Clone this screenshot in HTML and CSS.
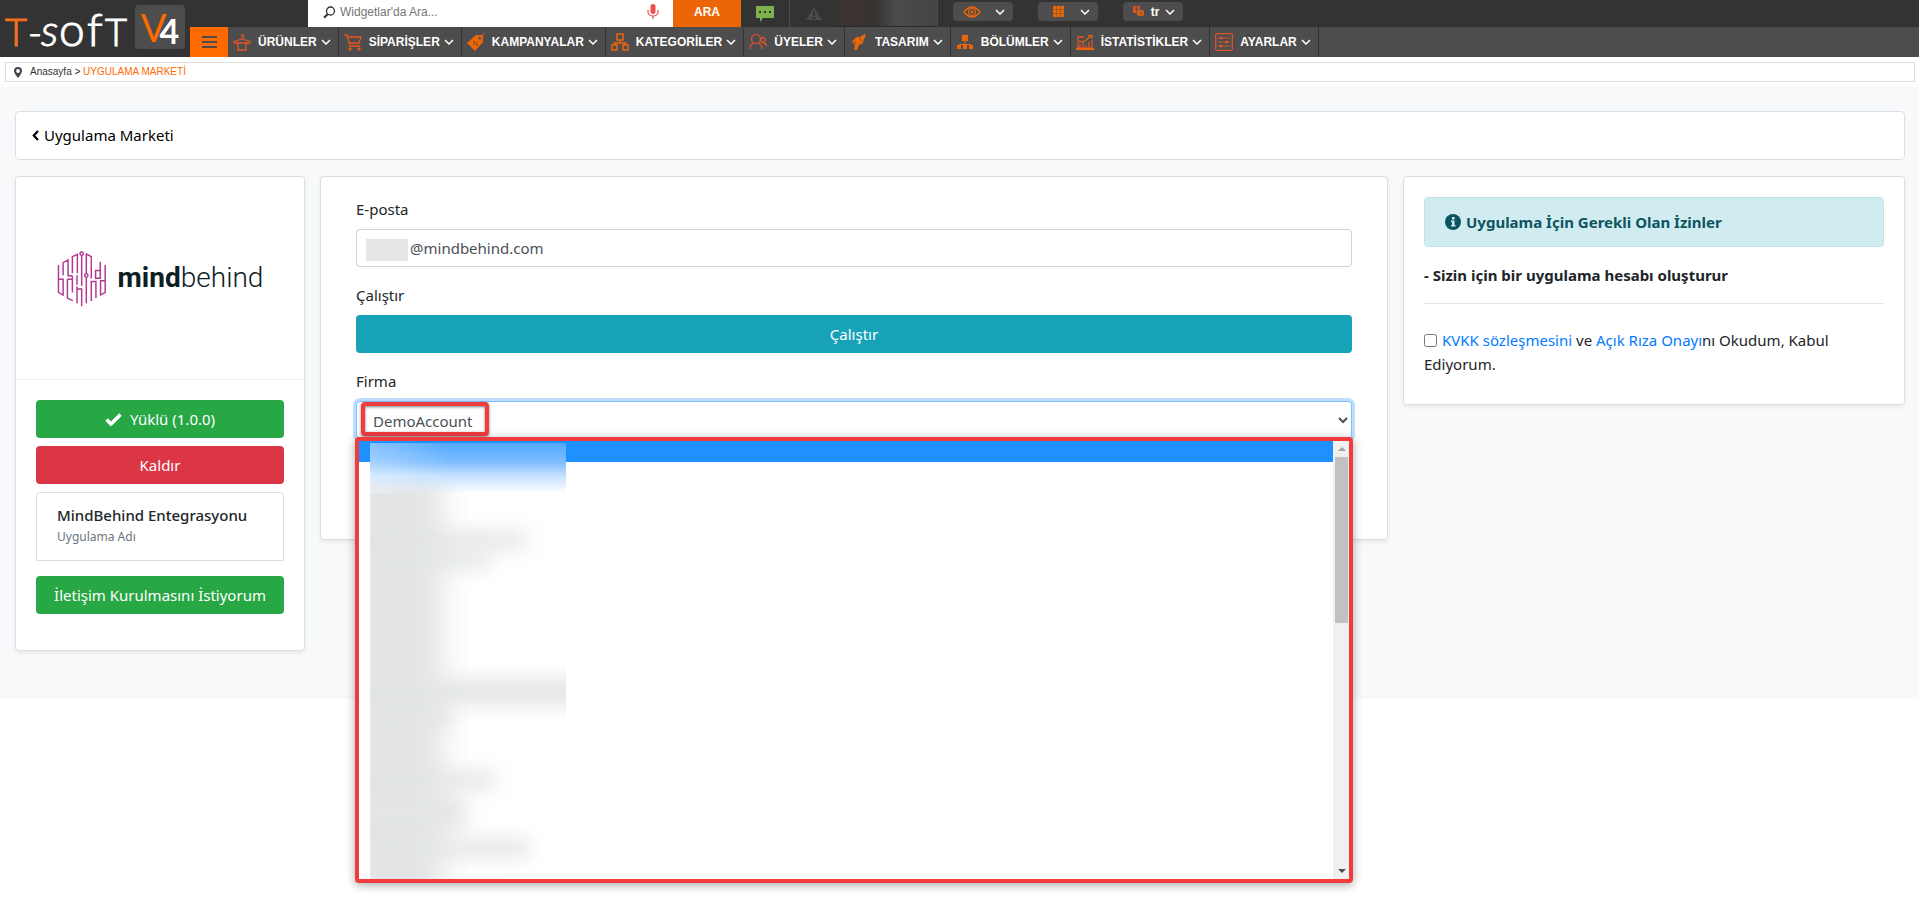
FILE: index.html
```html
<!DOCTYPE html>
<html lang="tr">
<head>
<meta charset="utf-8">
<meta name="viewport" content="width=device-width, initial-scale=1">
<title>Uygulama Marketi</title>
<link rel="stylesheet" href="styles.css">
</head>
<body>
<svg class="sprite" aria-hidden="true">
  <symbol id="chev" viewBox="0 0 10 6"><path d="M1 1l4 4 4-4" fill="none" stroke="#fff" stroke-width="1.5"/></symbol>
</svg>

<header class="header">
  <a class="brand" href="#" aria-label="T-Soft V4">
    <svg class="brand-word" viewBox="0 0 132 57" aria-hidden="true">
      <g fill="#fff" stroke="#fff" font-family="Lato, sans-serif" font-weight="300" font-size="38">
        <text x="5" y="46" fill="#f37021" stroke="#f37021">T</text>
        <text x="28" y="46">-</text>
        <text x="41" y="46" font-style="italic" font-size="44">s</text>
        <text x="59" y="46" font-size="46">o</text>
        <text x="87" y="46" font-size="46">f</text>
        <text x="105" y="46">T</text>
      </g>
    </svg>
    <span class="brand-tile"><span class="brand-v">V</span><span class="brand-4">4</span></span>
  </a>
  <div class="header-main">
    <div class="toolbar">
      <form class="search">
        <label class="search-box">
          <svg width="13" height="13" viewBox="0 0 13 13"><g fill="none" stroke="#333"><circle cx="7.500" cy="5" r="4" stroke-width="1.300"/><path d="M4.800 8L1 11.800" stroke-width="2"/></g></svg>
          <input class="search-input" type="text" placeholder="Widgetlar'da Ara..." aria-label="Widgetlar'da Ara">
          <svg width="12" height="16" viewBox="0 0 12 16"><rect x="3.500" y="0" width="5" height="10" rx="2.500" fill="#f04e4e"/><path d="M1 6v2a5 4 0 0 0 10 0V6M6 12v3" fill="none" stroke="#f04e4e" stroke-width="1.200"/></svg>
        </label>
        <button class="search-btn" type="button">ARA</button>
      </form>
      <button class="tool" type="button" aria-label="Mesajlar"><svg width="18" height="16" viewBox="0 0 18 16"><path d="M0 0h18v12H7l-3 4v-4H0z" fill="#7fb04f"/><path d="M3 5h2v2H3zM8 5h2v2H8zM13 5h2v2h-2z" fill="#2c3a1c"/></svg></button>
      <button class="tool tool-alert" type="button" aria-label="Uyarılar"><svg width="16" height="14" viewBox="0 0 16 14"><path d="M8 0l8 13H0z" fill="#4a4a4a"/><path d="M7 4h2v5H7zM7 10h2v2H7z" fill="#333"/></svg></button>
      <div class="account"></div>
      <div class="pills">
        <button class="pill" type="button" aria-label="Görünüm"><svg width="18" height="12" viewBox="0 0 18 12"><path d="M1 6q8-10 16 0q-8 10-16 0z" fill="none" stroke="#ec6608" stroke-width="1.500"/><circle cx="9" cy="6" r="3.500" fill="none" stroke="#ec6608" stroke-width="1.200"/><circle cx="9" cy="6" r="1.500" fill="#ec6608"/></svg><svg width="10" height="6"><use href="#chev"/></svg></button>
        <button class="pill" type="button" aria-label="Uygulamalar"><svg width="11" height="11" viewBox="0 0 11 11"><path d="M0 0h11v11H0z" fill="#ec6608"/><path d="M3.500 0v11M7.500 0v11M0 3.500h11M0 7.500h11" stroke="#7d5235" stroke-width=".6"/></svg><svg width="10" height="6"><use href="#chev"/></svg></button>
        <button class="pill pill-lang" type="button"><svg width="12" height="11" viewBox="0 0 12 11"><path d="M0 0h7v7H0z" fill="#d9531e"/><path d="M4 4h7v6H4z" fill="#ec6608" stroke="#4d4d4d" stroke-width=".6"/><path d="M1.500 2h4M3.500 1v4M6 8.500l1.500-3 1.500 3" fill="none" stroke="#4d4d4d" stroke-width=".8"/></svg><span>tr</span><svg width="10" height="6"><use href="#chev"/></svg></button>
      </div>
    </div>
    <nav class="nav">
      <button class="burger" type="button" aria-label="Menü"><i></i><i></i><i></i></button>
      <a class="nav-item" href="#"><svg class="ico" viewBox="0 0 18 18"><path d="M8 3a1.300 1.300 0 1 1 1.500 1.500L9 6M9 6L1 8.500V10h16V8.500zM5 9v8h8V9" fill="none" stroke="#e0552a" stroke-width="1.300"/></svg><span>ÜRÜNLER</span><svg class="chev"><use href="#chev"/></svg></a>
      <a class="nav-item" href="#"><svg class="ico" viewBox="0 0 18 18"><g fill="none" stroke="#e8541c" stroke-width="1.300"><path d="M0 2h3l3 11h10M4 4h13l-2 6H5.500"/></g><circle cx="6" cy="16" r="1.700" fill="#e8541c"/><circle cx="15" cy="16" r="1.700" fill="#e8541c"/></svg><span>SİPARİŞLER</span><svg class="chev"><use href="#chev"/></svg></a>
      <a class="nav-item" href="#"><svg class="ico" viewBox="0 0 18 18"><path d="M0 10L9 2l6 0 1 1v6L8 18z" fill="#ec6608"/><circle cx="13" cy="5" r="1.500" fill="#4d4d4d"/><path d="M13 5l4-5" stroke="#ec6608"/><path d="M6 12l5-3" stroke="#8a4a24"/><circle cx="7" cy="9" r="1" fill="#8a4a24"/><circle cx="10" cy="12" r="1" fill="#8a4a24"/></svg><span>KAMPANYALAR</span><svg class="chev"><use href="#chev"/></svg></a>
      <a class="nav-item" href="#"><svg class="ico" viewBox="0 0 18 18"><path d="M6 1h6v6H6zM1 12h5v5H1zM12 12h5v5h-5zM9 7v3M3.500 12v-2h11v2" fill="none" stroke="#ec6608" stroke-width="1.500"/></svg><span>KATEGORİLER</span><svg class="chev"><use href="#chev"/></svg></a>
      <a class="nav-item" href="#"><svg class="ico" viewBox="0 0 18 18"><g fill="none" stroke="#e0552a" stroke-width="1.200"><circle cx="7" cy="6" r="4.500"/><path d="M1 16q0-5 4-6M9 10q4 1 4 6"/><circle cx="14" cy="7" r="2.300"/><path d="M14 10q3 0 3.500 3"/></g></svg><span>ÜYELER</span><svg class="chev"><use href="#chev"/></svg></a>
      <a class="nav-item" href="#"><svg class="ico" viewBox="0 0 18 18"><path d="M2 8l5-4 3 0 5-3 1 2-2 3-1 4-4 2-2 5-3 0 1-4z" fill="#ec6608"/><path d="M4 8l2 3M9 5l3 3" stroke="#4d4d4d" stroke-width=".8"/></svg><span>TASARIM</span><svg class="chev"><use href="#chev"/></svg></a>
      <a class="nav-item" href="#"><svg class="ico" viewBox="0 0 18 18"><path d="M6 2h6v6H6zM8.500 8h1v4h-1zM3 11h12v1H3zM1 12h4v4H1zM7 12h4v4H7zM13 12h4v4h-4z" fill="#ec6608"/></svg><span>BÖLÜMLER</span><svg class="chev"><use href="#chev"/></svg></a>
      <a class="nav-item" href="#"><svg class="ico" viewBox="0 0 18 18"><path d="M8 4H2v11h14V7M4 14v-3M7 14v-4M10 14v-2M13 14V9" fill="none" stroke="#e0552a" stroke-width="1.300"/><path d="M3 8l4 1 3-2 5-4M12 2.500h4V6" fill="none" stroke="#ec6608" stroke-width="1.200"/><path d="M0 15h18v2H0z" fill="#ec6608"/></svg><span>İSTATİSTİKLER</span><svg class="chev"><use href="#chev"/></svg></a>
      <a class="nav-item" href="#"><svg class="ico" viewBox="0 0 18 18"><rect x=".7" y=".7" width="16.600" height="16.600" rx="1" fill="none" stroke="#d9532c" stroke-width="1.300"/><path d="M3 5h12M3 9h12M3 13h12" stroke="#d9532c"/><circle cx="6" cy="5" r="1.500" fill="#d9532c"/><circle cx="11.500" cy="9" r="1.500" fill="#d9532c"/><circle cx="6" cy="13" r="1.500" fill="#d9532c"/></svg><span>AYARLAR</span><svg class="chev"><use href="#chev"/></svg></a>
    </nav>
  </div>
</header>

<div class="crumbs">
  <svg width="8" height="11" viewBox="0 0 8 11"><path d="M4 11Q0 6 0 4a4 4 0 0 1 8 0q0 2-4 7z" fill="#444"/><circle cx="4" cy="4" r="1.900" fill="#fff"/></svg>
  <span><a href="#">Anasayfa</a> &gt; <a class="current" href="#">UYGULAMA MARKETİ</a></span>
</div>

<main class="page">
  <div class="card back-bar">
    <a class="back" href="#"><svg width="7" height="11" viewBox="0 0 7 11"><path d="M6 1L1.800 5.500 6 10" fill="none" stroke="#000" stroke-width="2.200"/></svg>Uygulama Marketi</a>
  </div>

  <div class="columns">
    <section class="card app">
      <div class="app-logo">
        <svg width="50" height="57" viewBox="172 480 150 172" aria-hidden="true"><g fill="none" stroke="#b03c92" stroke-width="4.500"><path d="M176 525V608L190 616V568H176M190 556V518L205 510V558H218M218 550V500L233 493V550M203 568V625L219 633M203 568H218V608M232 556V585M246 496V588M260 550V492L275 500V566M260 562V641M232 590V641M232 598H246V650M275 634V575H289V625M302 516V565H288V542H302M317 525V608L303 616V590M303 590V573H317M218 558V568"/><circle cx="246" cy="491" r="5"/><circle cx="260" cy="557" r="5"/></g></svg>
        <span class="app-name"><b>mind</b>behind</span>
      </div>
      <div class="app-actions">
        <button class="btn btn-green" type="button"><svg width="17" height="13" viewBox="0 0 17 13"><path d="M1.500 6.500L6 11 15.500 1.500" fill="none" stroke="#fff" stroke-width="3.600"/></svg>Yüklü (1.0.0)</button>
        <button class="btn btn-red" type="button">Kaldır</button>
        <div class="app-info"><strong>MindBehind Entegrasyonu</strong><small>Uygulama Adı</small></div>
        <button class="btn btn-green" type="button">İletişim Kurulmasını İstiyorum</button>
      </div>
    </section>

    <form class="card settings">
      <label class="label" for="email">E-posta</label>
      <div class="field"><input class="control control-email" id="email" type="text" value="@mindbehind.com"><span class="mask"></span></div>
      <label class="label" for="run">Çalıştır</label>
      <div class="field"><button class="btn btn-teal" id="run" type="button">Çalıştır</button></div>
      <label class="label" for="firm">Firma</label>
      <div class="field">
        <select class="control control-focus" id="firm"><option>DemoAccount</option></select>
        <span class="marker"></span>
        <div class="menu">
          <div class="menu-list">
            <div class="menu-active"></div>
            <div class="smudge">
              <i class="smudge-top"></i><i class="smudge-base"></i>
              <i class="line line-1"></i>
              <i class="line line-2"></i>
              <i class="line line-3"></i>
              <i class="line line-4"></i>
              <i class="line line-5"></i>
              <i class="line line-6"></i>
              <i class="line line-7"></i>
            </div>
          </div>
          <div class="scroll">
            <svg width="8" height="4" viewBox="0 0 8 4"><path d="M0 4l4-4 4 4z" fill="#a3a3a3"/></svg>
            <i class="thumb"></i>
            <svg width="8" height="4" viewBox="0 0 8 4"><path d="M0 0l4 4 4-4z" fill="#505050"/></svg>
          </div>
        </div>
      </div>
    </form>

    <section class="card consent">
      <div class="alert"><svg width="16" height="16" viewBox="0 0 16 16"><circle cx="8" cy="8" r="8" fill="#0c5460"/><path d="M7 3h2.500v2.500H7zM6 6.500h3.500V11h1v1.500H6V11h1V8H6z" fill="#d1ecf1"/></svg>Uygulama İçin Gerekli Olan İzinler</div>
      <p class="perm">- Sizin için bir uygulama hesabı oluşturur</p>
      <hr class="rule">
      <div class="agree"><input class="agree-box" id="agree" type="checkbox"><label for="agree"><a href="#">KVKK sözleşmesini</a> ve <a href="#">Açık Rıza Onayı</a>nı Okudum, Kabul Ediyorum.</label></div>
    </section>
  </div>
</main>
</body>
</html>
```
FILE: styles.css
```css
* { box-sizing: border-box; }
body { min-height: 100vh; margin: 0; background: #fff; color: #212529; font: 15px/24px "Noto Sans", sans-serif; }
a { color: #007bff; text-decoration: none; }
button, input, select { font: inherit; }
button { border: 0; padding: 0; cursor: pointer; }
svg { display: block; flex: none; }
.sprite { position: absolute; width: 0; height: 0; }

/* header */
.header { display: grid; grid-template-columns: 190px minmax(0, 1fr); background: #333; font: bold 12px/16px "Liberation Sans", Arial, sans-serif; }
.brand { display: flex; height: 57px; }
.brand-word { width: 132px; height: 57px; overflow: visible; }
.brand-tile { display: flex; justify-content: center; align-items: center; width: 50px; height: 44px; margin: 5px 0 0 3px; border-radius: 4px; background: #4d4d4d; }
.brand-v { color: #ff6a00; font: 400 38px/44px Lato, sans-serif; }
.brand-4 { margin: 8px 0 0 -7px; color: #fff; font: 700 34px/40px Lato, sans-serif; }
.toolbar { display: flex; height: 27px; padding-left: 118px; }
.search { display: flex; width: 433px; }
.search-box { display: flex; flex: 1; align-items: center; padding: 0 14px 3px 15px; background: #fff; }
.search-input { flex: 1; min-width: 0; border: 0; padding: 0 4px; outline: 0; background: none; font-weight: 400; }
.search-input::placeholder { color: #757575; }
.search-btn { width: 68px; padding-bottom: 3px; background: #ec6608; color: #fff; }
.tool { display: grid; place-items: center; width: 49px; background: #333; border-right: 1px solid #4d4d4d; }
.tool-alert { width: 42px; border: 0; padding-left: 6px; }
.account { width: 106px; background: linear-gradient(90deg, #333, #3d3431 16%, #343332 40%, #4b4b4b 62%, #444); border-right: 1px solid #4d4d4d; border-bottom: 1px solid #2b2b2b; }
.pills { display: flex; gap: 25px; padding: 2px 0 0 15px; }
.pill { display: flex; align-items: center; justify-content: space-between; width: 60px; height: 19px; padding: 0 8px 0 10px; border-radius: 4px; background: #4d4d4d; color: #fff; }
.pill:nth-child(2) { padding-left: 15px; }
.nav { display: flex; height: 30px; background: #4d4d4d; }
.burger { display: flex; flex-direction: column; align-items: center; justify-content: center; gap: 3px; width: 38px; background: #ff6a00; }
.burger i { width: 15px; height: 2px; background: #4d4d4d; }
.nav-item { display: flex; align-items: center; padding: 0 7px 0 5px; border-right: 1px solid #333; color: #fff; }
.nav-item span { margin: 0 4px 0 7px; }
.ico { width: 18px; height: 18px; }
.chev { width: 10px; height: 6px; }

/* breadcrumb */
.crumbs { display: flex; align-items: center; gap: 8px; height: 20px; margin: 5px 4px 5px 5px; padding-left: 8px; border: 1px solid #ddd; font: 10px/16px "Liberation Sans", Arial, sans-serif; }
.crumbs a { color: #333; }
.crumbs .current { color: #ff6a00; }

/* page */
.page { padding: 24px 14px 48px 15px; background: #f8f9fb; }
.card { border: 1px solid #dcdfe2; border-radius: 4px; background: #fff; box-shadow: 0 2px 4px rgba(0, 0, 0, .07); }
.back-bar { margin-bottom: 16px; padding: 11px 16px 12px; box-shadow: none; }
.back { display: flex; align-items: center; gap: 5px; color: #000; }
.columns { display: grid; grid-template-columns: minmax(0, 290fr) minmax(0, 1068fr) minmax(0, 502fr); gap: 15px; align-items: start; }
.btn { display: flex; align-items: center; justify-content: center; gap: 8px; width: 100%; height: 38px; border-radius: 4px; color: #fff; white-space: nowrap; }
.btn-green { background: #28a745; }
.btn-red { background: #dc3545; }
.btn-teal { background: #17a2b8; }

.app-logo { display: flex; align-items: center; justify-content: center; gap: 11px; height: 203px; border-bottom: 1px solid #eee; color: #0c2024; }
.app-name { font: 300 28px/32px Roboto, sans-serif; }
.app-name b { font-weight: 700; }
.app-actions { display: grid; gap: 8px; padding: 20px 20px 36px; }
.app-info { display: grid; margin-bottom: 7px; padding: 10px 20px 13px; border: 1px solid #dcdfe2; border-radius: 4px 4px 0 0; white-space: nowrap; }
.app-info strong { font-weight: 500; }
.app-info small { color: #6c757d; font-size: 12px; line-height: 20px; }

.settings { padding: 20px 35px 84px; }
.label { display: block; margin-bottom: 8px; }
.field { position: relative; margin-bottom: 16px; }
.control { display: block; width: 100%; height: 38px; padding: 0 12px; border: 1px solid #ced4da; border-radius: 4px; background: #fff; color: #495057; }
.control-email { padding-left: 53px; }
.control-focus { padding-top: 2px; border-color: #80bdff; outline: 0; box-shadow: 0 0 0 3px #bfdeff; }
.mask { position: absolute; left: 10px; top: 10px; width: 42px; height: 22px; background: #e6e6e6; }
.marker { position: absolute; left: 5px; top: 1px; width: 128px; height: 34px; border: 4px solid #f03c3c; border-radius: 4px; box-shadow: 0 1px 3px rgba(0, 0, 0, .5), inset 0 1px 3px rgba(0, 0, 0, .5); }
.menu { position: absolute; z-index: 2; left: -1px; right: -1px; top: 36px; display: flex; height: 446px; border: 4px solid #f03c3c; border-radius: 4px; background: #fff; box-shadow: 0 2px 10px rgba(0, 0, 0, .35); }
.menu-list { position: relative; flex: 1; }
.menu-active { height: 21px; background: #1e90ff; }
.smudge { position: absolute; left: 11px; top: 2px; bottom: 0; width: 196px; overflow: hidden; }
.smudge i { position: absolute; left: -20px; }
.smudge .smudge-top { left: 0; top: 0; z-index: 1; width: 196px; height: 50px; background: linear-gradient(90deg, rgba(255, 255, 255, .3), transparent 40%), linear-gradient(#52a8ff, #7dbdff 38%, #c5e1ff 65%, rgba(255, 255, 255, 0)); }
.smudge-base { top: 20px; width: 92px; height: 460px; background: #e3e4e5; filter: blur(15px); }
.line { height: 18px; background: #e3e5e6; filter: blur(10px); }
.line-1 { top: 88px; width: 176px; }
.line-2 { top: 108px; width: 140px; }
.line-3 { top: 236px; width: 240px; height: 26px; }
.line-4 { top: 264px; width: 100px; }
.line-5 { top: 328px; width: 145px; }
.line-6 { top: 354px; width: 115px; height: 32px; }
.line-7 { top: 396px; width: 180px; }
.scroll { display: flex; flex-direction: column; align-items: center; width: 16px; padding: 6px 1px 6px 2px; background: #f0f0f0; }
.thumb { width: 13px; height: 166px; margin: 6px 0 auto; background: #c1c1c1; }

.consent { padding: 20px 20px 28px; }
.alert { display: flex; align-items: center; gap: 5px; padding: 12px 20px; border: 1px solid #bee5eb; border-radius: 4px; background: #d1ecf1; color: #0c5460; font-weight: 700; }
.perm { margin: 16px 0; font-weight: 700; }
.rule { margin: 0 0 24px; border: 0; border-top: 1px solid #e2e3e5; }
.agree-box { width: 13px; height: 13px; margin: 0 5px 0 0; vertical-align: -1px; }
```
